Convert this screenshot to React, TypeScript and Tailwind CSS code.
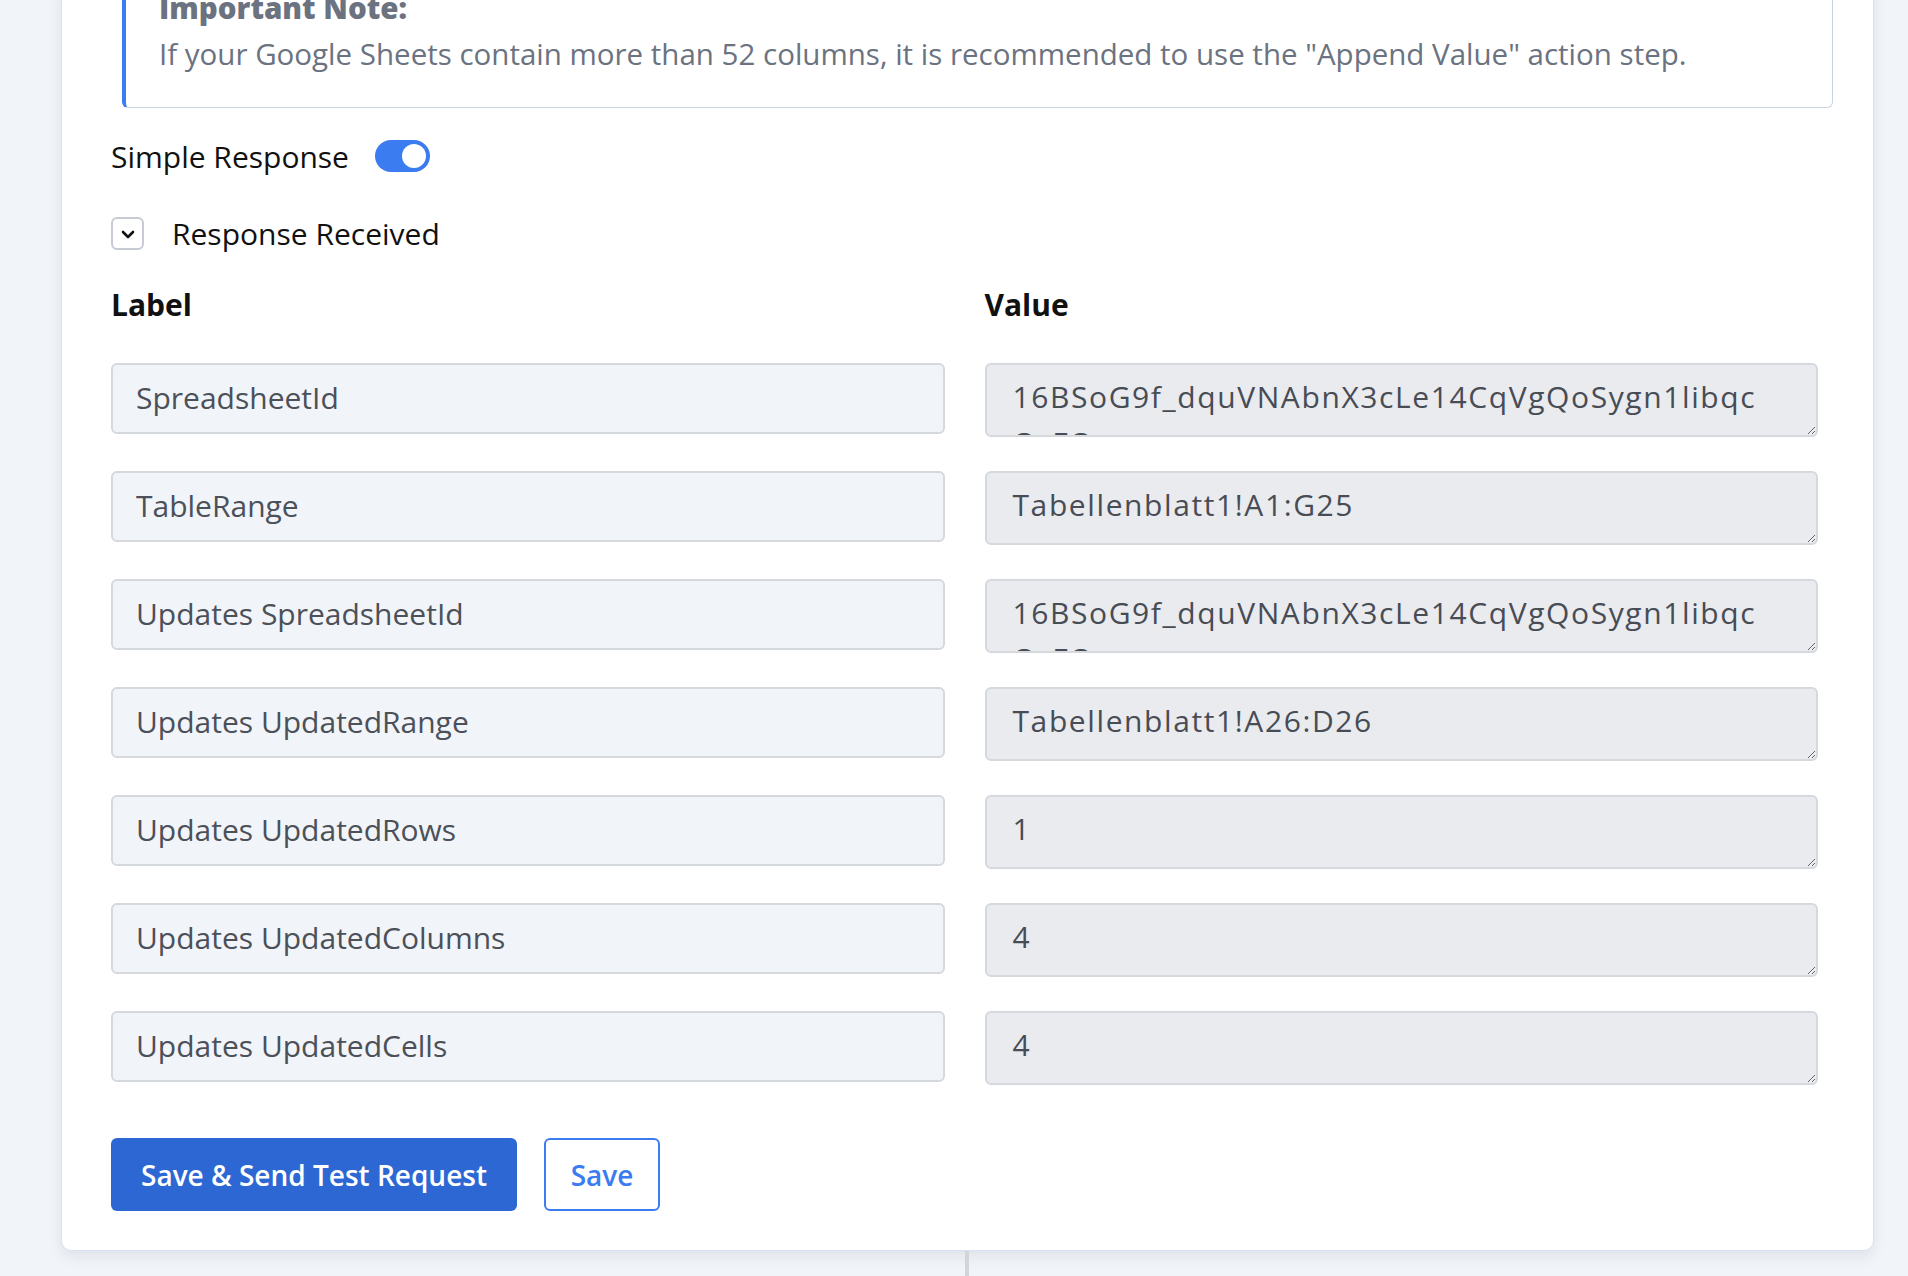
import { useState } from "react";

const rows = [
  { label: "SpreadsheetId", value: "16BSoG9f_dquVNAbnX3cLe14CqVgQoSygn1libqc\nQ_FQ" },
  { label: "TableRange", value: "Tabellenblatt1!A1:G25" },
  { label: "Updates SpreadsheetId", value: "16BSoG9f_dquVNAbnX3cLe14CqVgQoSygn1libqc\nQ_FQ" },
  { label: "Updates UpdatedRange", value: "Tabellenblatt1!A26:D26" },
  { label: "Updates UpdatedRows", value: "1" },
  { label: "Updates UpdatedColumns", value: "4" },
  { label: "Updates UpdatedCells", value: "4" },
];

export default function App() {
  const [simple, setSimple] = useState(true);
  const [open, setOpen] = useState(true);

  return (
    <div className="h-[1276px] overflow-hidden bg-[#f1f4f8] font-['Open_Sans','Noto_Sans',sans-serif] text-[30px]">
      {/* Step card (top is scrolled out of view) */}
      <div className="ml-[61px] w-[1813px] bg-white border border-t-0 border-[#d8e2f6] rounded-b-[10px] shadow-[0_6px_14px_rgba(30,41,59,0.08)] pl-[49px] pr-[55px] pb-[39px]">
        {/* Note */}
        <div className="ml-[11px] -mr-[15px] -mt-[16px] border border-[#cbd3e1] border-l-4 border-l-[#3b7cf0] rounded-md pl-[33px] pb-[30px] text-[29.5px] leading-[46px] text-[#6b7280]">
          <div className="font-extrabold">Important Note:</div>
          <div>
            If your Google Sheets contain more than 52 columns, it is recommended to use the "Append Value" action step.
          </div>
        </div>

        {/* Simple response toggle */}
        <div className="mt-[32px] flex items-center gap-[26px] h-[32px]">
          <span className="text-[#111]">Simple Response</span>
          <button
            onClick={() => setSimple(!simple)}
            className={`relative w-[55px] h-[32px] rounded-full ${simple ? "bg-[#3b7cf0]" : "bg-[#cbd3e1]"}`}
          >
            <span
              className={`absolute top-[4px] w-[24px] h-[24px] rounded-full bg-white ${simple ? "right-[4px]" : "left-[4px]"}`}
            />
          </button>
        </div>

        {/* Response received toggle */}
        <div className="mt-[45px] flex items-center gap-[28px] h-[33px]">
          <button
            onClick={() => setOpen(!open)}
            className="w-[33px] h-[33px] border-2 border-[#c7ccd4] rounded-md flex items-center justify-center"
          >
            <svg width="20" height="20" viewBox="0 0 20 20" fill="none" stroke="#111" strokeWidth="2.6" strokeLinecap="round" strokeLinejoin="round" className={open ? "" : "-rotate-90"}>
              <path d="M5 8l5 5 5-5" />
            </svg>
          </button>
          <span className="text-[#111]">Response Received</span>
        </div>

        {open && (
          <>
            <div className="mt-[35px] grid grid-cols-2 gap-x-10 leading-[40px] font-bold text-[#111]">
              <div>Label</div>
              <div>Value</div>
            </div>

            <div className="mt-[38px] grid grid-cols-2 gap-x-10 gap-y-[34px]">
              {rows.map((r) => (
                <div key={r.label} className="contents">
                  <input
                    type="text"
                    defaultValue={r.label}
                    className="h-[71px] w-full bg-[#f1f4f8] border-2 border-[#d5d8dd] rounded-md px-[23px] pb-[3px] text-[#4b5059] outline-none"
                  />
                  <textarea
                    defaultValue={r.value}
                    rows={1}
                    className="block h-[74px] w-full bg-[#e9ebef] border-2 border-[#d5d8dd] rounded-md pl-[26px] pr-4 pt-[9px] leading-[46px] tracking-[1.6px] text-[#474c55] outline-none overflow-hidden whitespace-pre"
                  />
                </div>
              ))}
            </div>
          </>
        )}

        {/* Actions */}
        <div className="mt-[53px] flex gap-[27px]">
          <button className="h-[73px] w-[406px] bg-[#2d67d3] text-white text-[28px] font-semibold rounded-md">
            Save &amp; Send Test Request
          </button>
          <button className="h-[73px] w-[116px] bg-white border-2 border-[#3b7cf0] text-[#3b7cf0] text-[28px] font-semibold rounded-md">
            Save
          </button>
        </div>
      </div>

      {/* connector to next step */}
      <div className="ml-[965px] w-[4px] h-[40px] bg-[#d3d5d9]" />
    </div>
  );
}
